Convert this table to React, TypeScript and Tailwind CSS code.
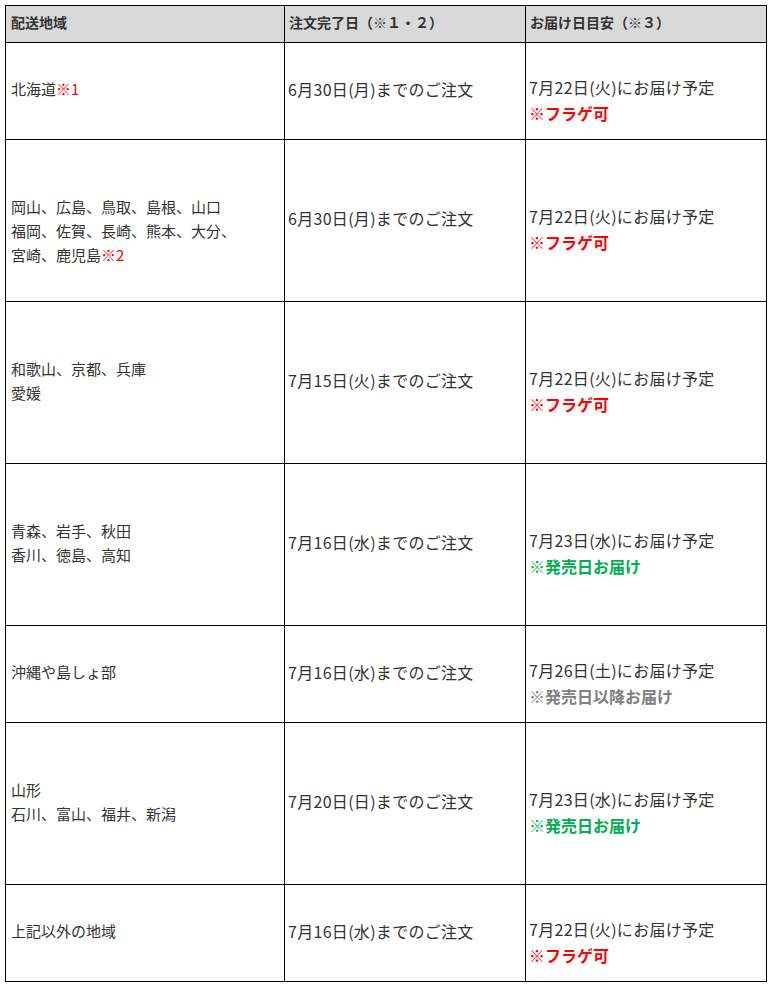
import React from "react";

type Note = { text: string; tone: "red" | "green" | "gray" };

type Row = {
  h: "short" | "tall";
  region: React.ReactNode;
  regionPad?: boolean;
  order: string;
  delivery: string;
  note: Note;
};

const RED_NOTE: Note = { text: "※フラゲ可", tone: "red" };
const GREEN_NOTE: Note = { text: "※発売日お届け", tone: "green" };
const GRAY_NOTE: Note = { text: "※発売日以降お届け", tone: "gray" };

const ROWS: Row[] = [
  {
    h: "short",
    region: (
      <>
        北海道<span className="text-[#ff0000]">※1</span>
      </>
    ),
    order: "6月30日(月)までのご注文",
    delivery: "7月22日(火)にお届け予定",
    note: RED_NOTE,
  },
  {
    h: "tall",
    regionPad: true,
    region: (
      <>
        岡山、広島、鳥取、島根、山口
        <br />
        福岡、佐賀、長崎、熊本、大分、
        <br />
        宮崎、鹿児島<span className="text-[#ff0000]">※2</span>
      </>
    ),
    order: "6月30日(月)までのご注文",
    delivery: "7月22日(火)にお届け予定",
    note: RED_NOTE,
  },
  {
    h: "tall",
    region: (
      <>
        和歌山、京都、兵庫
        <br />
        愛媛
      </>
    ),
    order: "7月15日(火)までのご注文",
    delivery: "7月22日(火)にお届け予定",
    note: RED_NOTE,
  },
  {
    h: "tall",
    region: (
      <>
        青森、岩手、秋田
        <br />
        香川、徳島、高知
      </>
    ),
    order: "7月16日(水)までのご注文",
    delivery: "7月23日(水)にお届け予定",
    note: GREEN_NOTE,
  },
  {
    h: "short",
    region: <>沖縄や島しょ部</>,
    order: "7月16日(水)までのご注文",
    delivery: "7月26日(土)にお届け予定",
    note: GRAY_NOTE,
  },
  {
    h: "tall",
    region: (
      <>
        山形
        <br />
        石川、富山、福井、新潟
      </>
    ),
    order: "7月20日(日)までのご注文",
    delivery: "7月23日(水)にお届け予定",
    note: GREEN_NOTE,
  },
  {
    h: "short",
    region: <>上記以外の地域</>,
    order: "7月16日(水)までのご注文",
    delivery: "7月22日(火)にお届け予定",
    note: RED_NOTE,
  },
];

const toneClass: Record<Note["tone"], string> = {
  red: "text-[#ff0000]",
  green: "text-[#00b050]",
  gray: "text-[#808080]",
};

function ShippingRow({ row }: { row: Row }) {
  const height = row.h === "tall" ? "h-[162px]" : "h-[97px]";
  return (
    <>
      <div
        className={`${height} flex flex-col justify-center border-r border-b border-black pb-[4px] pl-[5px] text-[15px] leading-[24px] ${
          row.regionPad ? "pt-[24px]" : ""
        }`}
      >
        <p>{row.region}</p>
      </div>
      <div className={`${height} flex flex-col justify-center border-r border-b border-black pb-[5px] pl-[3px] text-[16px] leading-[26px] tracking-[0.3px]`}>
        <p>{row.order}</p>
      </div>
      <div className={`${height} flex flex-col justify-center border-r border-b border-black pb-[4px] pl-[3px] pt-[21px] text-[16px] leading-[26px] tracking-[0.3px]`}>
        <p>{row.delivery}</p>
        <p className={`font-bold tracking-normal ${toneClass[row.note.tone]}`}>{row.note.text}</p>
      </div>
    </>
  );
}

export default function App() {
  return (
    <div
      className="min-h-[987px] w-[771px] bg-white pl-[5px] pt-[5px] text-[#333333]"
      style={{ fontFamily: '"Noto Sans CJK JP", "Noto Sans", sans-serif' }}
    >
      <div className="grid w-[762px] grid-cols-[279px_241px_241px] border-l border-t border-black">
        {/* Header */}
        <div className="flex h-[37px] items-center border-r border-b border-black bg-[#d9d9d9] pb-[3px] pl-[5px] text-[14px] font-bold">
          配送地域
        </div>
        <div className="flex h-[37px] items-center border-r border-b border-black bg-[#d9d9d9] pb-[3px] pl-[4px] text-[14px] font-bold">
          注文完了日（※１・２）
        </div>
        <div className="flex h-[37px] items-center border-r border-b border-black bg-[#d9d9d9] pb-[3px] pl-[4px] text-[14px] font-bold">
          お届け日目安（※３）
        </div>

        {ROWS.map((row, i) => (
          <ShippingRow key={i} row={row} />
        ))}
      </div>
    </div>
  );
}
